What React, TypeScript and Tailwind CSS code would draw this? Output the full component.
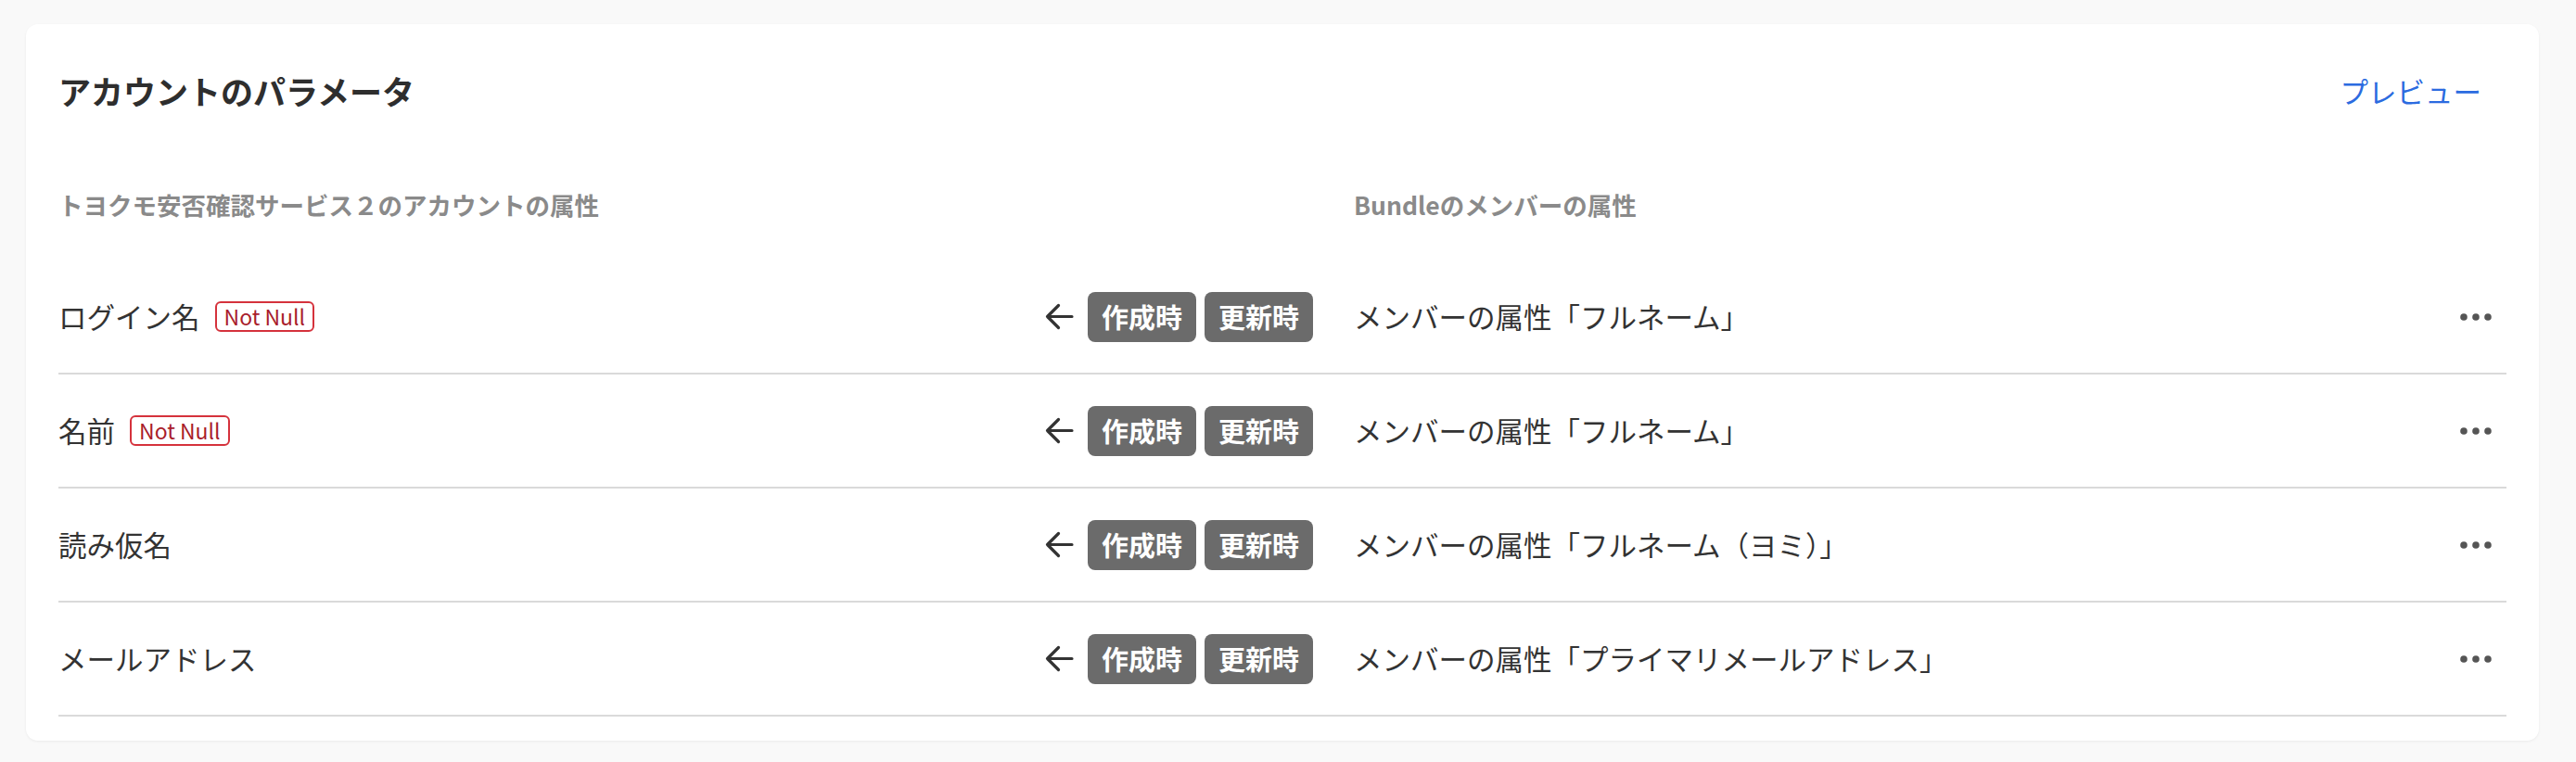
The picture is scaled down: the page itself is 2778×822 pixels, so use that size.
type Mapping = {
  label: string;
  notNull?: boolean;
  source: string;
};

const rows: Mapping[] = [
  { label: 'ログイン名', notNull: true, source: 'メンバーの属性「フルネーム」' },
  { label: '名前', notNull: true, source: 'メンバーの属性「フルネーム」' },
  { label: '読み仮名', source: 'メンバーの属性「フルネーム（ヨミ）」' },
  { label: 'メールアドレス', source: 'メンバーの属性「プライマリメールアドレス」' },
];

// 左向き矢印
function ArrowIcon() {
  return (
    <svg width="31" height="31" viewBox="0 0 31 31" fill="none" aria-hidden>
      <path
        d="M29 15.5H2.5M14.5 3.5 2.5 15.5l12 12"
        stroke="#333333"
        strokeWidth="3.2"
        strokeLinecap="round"
        strokeLinejoin="round"
      />
    </svg>
  );
}

// 三点リーダーのメニュー
function DotsIcon() {
  return (
    <svg width="34" height="10" viewBox="0 0 34 10" aria-hidden>
      <circle cx="4" cy="5" r="3.8" fill="#555555" />
      <circle cx="17" cy="5" r="3.8" fill="#555555" />
      <circle cx="30" cy="5" r="3.8" fill="#555555" />
    </svg>
  );
}

function Tag({ children }: { children: React.ReactNode }) {
  return (
    <span className="flex h-[54px] items-center rounded-[8px] bg-[#6b6b6b] px-[15px] text-[29px] font-bold text-white">
      {children}
    </span>
  );
}

export default function App() {
  return (
    <div className="min-h-screen bg-[#f9f9f9] pt-[26px] pr-[40px] pb-[22px] pl-[28px] font-['Noto_Sans_CJK_JP','Noto_Sans',sans-serif]">
      <section className="rounded-[13px] bg-white px-[35px] pb-[26px] shadow-[0_1px_3px_rgba(0,0,0,0.06)]">
        {/* ヘッダー */}
        <header className="flex items-center justify-between pt-[48px]">
          <h2 className="text-[35px] leading-[48px] font-bold text-[#2e2e2e]">
            アカウントのパラメータ
          </h2>
          <button className="pr-[27px] text-[30.5px] leading-[48px] text-[#2b6be0]">
            プレビュー
          </button>
        </header>

        {/* 列見出し */}
        <div className="mt-[81px] grid grid-cols-[1353px_1fr] gap-x-[44px] text-[26.5px] leading-[36px] font-bold text-[#8a8a8a]">
          <div>トヨクモ安否確認サービス２のアカウントの属性</div>
          <div>Bundleのメンバーの属性</div>
        </div>

        <ul className="mt-[42px]">
          {rows.map((row) => (
            <li
              key={row.label}
              className="grid h-[123px] grid-cols-[1353px_1fr] items-center gap-x-[44px] border-b-2 border-[#dadada]"
            >
              <div className="flex items-center">
                <span className="text-[30.5px] text-[#333333]">{row.label}</span>
                {row.notNull && (
                  <span className="ml-[16px] flex h-[33px] items-center rounded-[6px] border-2 border-[#d5323c] px-[8px] text-[23px] text-[#a91d2b]">
                    Not Null
                  </span>
                )}
                <div className="ml-auto flex items-center">
                  <ArrowIcon />
                  <div className="ml-[15px] flex gap-[9px]">
                    <Tag>作成時</Tag>
                    <Tag>更新時</Tag>
                  </div>
                </div>
              </div>
              <div className="flex items-center justify-between">
                <span className="text-[30.5px] text-[#333333]">{row.source}</span>
                <button className="mr-[16px] flex items-center" aria-label="menu">
                  <DotsIcon />
                </button>
              </div>
            </li>
          ))}
        </ul>
      </section>
    </div>
  );
}
